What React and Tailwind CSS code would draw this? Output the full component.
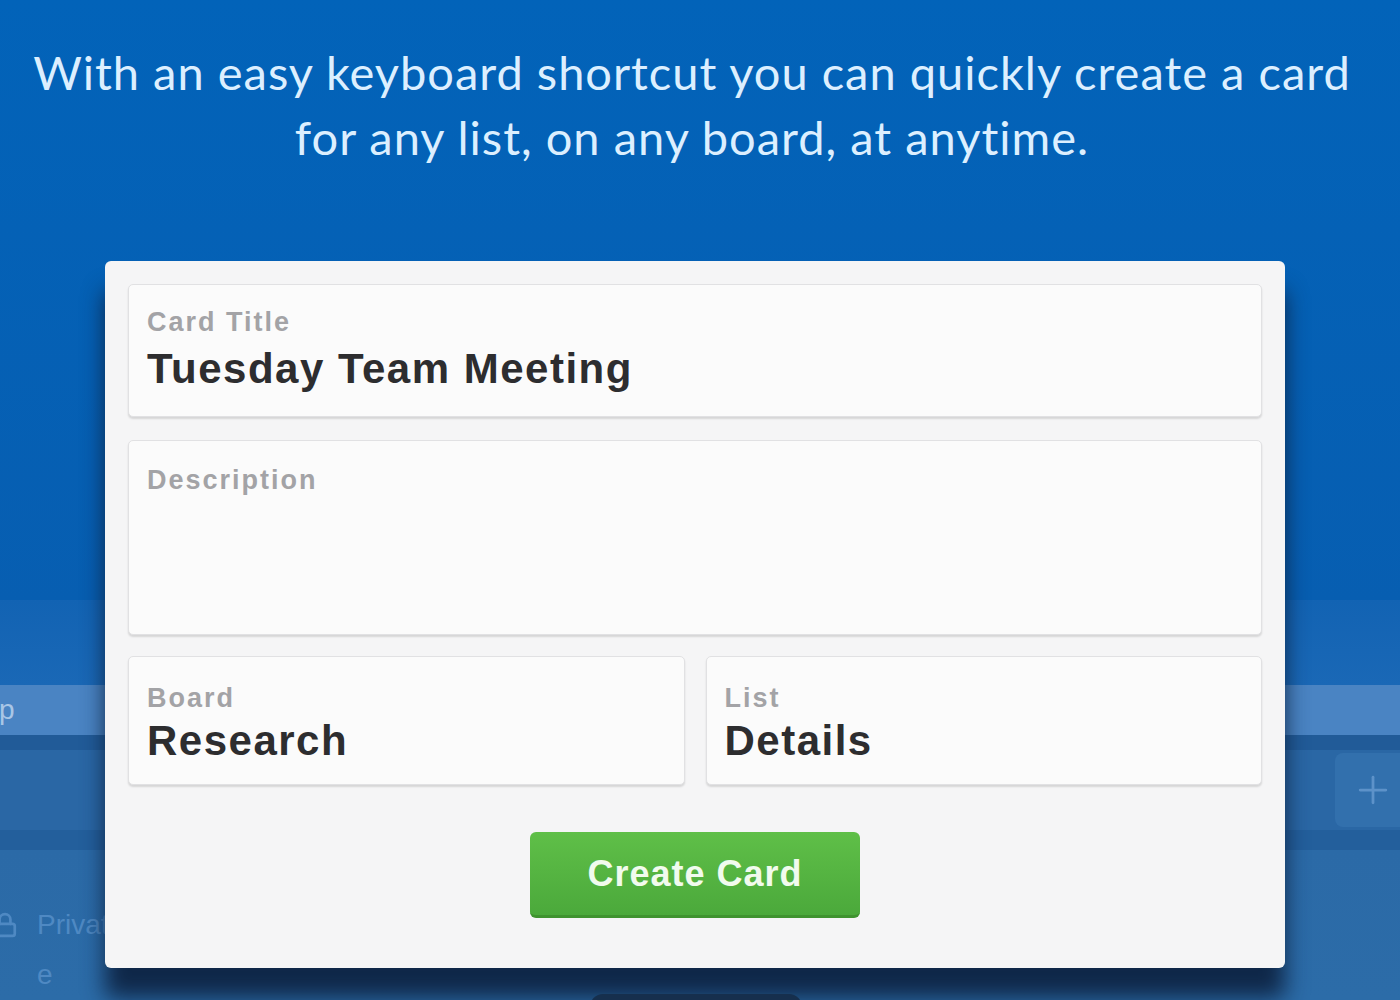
import { Plus, Lock } from "lucide-react";

function Field({ label, value, className = "", gap = "mt-3" }) {
  return (
    <div
      className={[
        "rounded-[5px] border border-[#e1e1e3] bg-[#fbfbfb] pl-[18px] pt-[24px] shadow-[0_2px_2px_rgba(0,0,0,0.13)]",
        className,
      ].join(" ")}
    >
      <p className="text-[27px] font-bold leading-none tracking-[2px] text-[#a3a3a6]">{label}</p>
      {value && (
        <p className={["text-[42px] font-bold leading-none tracking-[1.5px] text-[#2d2d2f]", gap].join(" ")}>
          {value}
        </p>
      )}
    </div>
  );
}

export default function App() {
  return (
    <div className="relative h-[1000px] w-[1400px] overflow-hidden bg-[#0262b7] font-['Liberation_Sans',Arial,sans-serif]">
      {/* ── Tablero difuminado detrás ─────────────────────────── */}
      <div className="flex h-full flex-col">
        <div className="h-[600px] shrink-0 bg-gradient-to-b from-[#0263b9] to-[#075eb1]" />
        <div className="h-[85px] shrink-0 bg-gradient-to-b from-[#1263b3] to-[#1a68b6]" />
        <div className="flex h-[50px] shrink-0 items-center bg-[#4a84c3] text-[28px] text-[#a9c6e6]">
          <span className="-ml-[1px]">p</span>
        </div>
        <div className="h-[15px] shrink-0 bg-[#215b98]" />
        <div className="flex h-[80px] shrink-0 items-center justify-end bg-[#2a67a5]">
          <div className="-mr-[10px] flex h-[74px] w-[75px] items-center justify-center rounded-lg bg-[#3270ad]">
            <Plus size={44} strokeWidth={1.5} className="text-[#5d92c9]" />
          </div>
        </div>
        <div className="h-[20px] shrink-0 bg-[#235f9c]" />
        <div className="min-h-0 flex-1 overflow-hidden bg-gradient-to-b from-[#2b6aa7] to-[#2c6ca8] pt-[50px] text-[28px] leading-[50px] text-[#4f89c3]">
          <div className="flex items-center gap-[19px]">
            <Lock size={26} strokeWidth={2.5} className="-ml-[8px]" />
            <span>Private</span>
          </div>
          <div className="pl-[37px]">e</div>
        </div>
      </div>

      {/* ── Capa superior: título y modal ─────────────────────── */}
      <div className="absolute inset-0 flex flex-col">
        <h1 className="mt-[40px] pr-[16px] text-center font-['Lato',sans-serif] text-[47px] font-normal leading-[65px] tracking-[1px] text-[#dcefff]">
          With an easy keyboard shortcut you can quickly create a card
          <br />
          for any list, on any board, at anytime.
        </h1>

        <div className="ml-[105px] mt-[91px] flex h-[707px] w-[1180px] flex-col rounded-[6px] bg-[#f5f5f6] p-[23px] shadow-[0_30px_22px_rgba(12,32,62,0.9)]">
          <Field label="Card Title" value="Tuesday Team Meeting" className="h-[133px]" gap="mt-[12px]" />
          <Field label="Description" className="mt-[23px] h-[195px] pt-[26px]" />
          <div className="mt-[21px] grid grid-cols-2 gap-[21px]">
            <Field label="Board" value="Research" className="h-[129px] pt-[28px]" gap="mt-[8px]" />
            <Field label="List" value="Details" className="h-[129px] pt-[28px]" gap="mt-[8px]" />
          </div>
          <div className="mt-[47px] flex justify-center">
            <button
              type="button"
              className="flex h-[86px] w-[330px] items-center justify-center rounded-[6px] border-b-[3px] border-[#3f932f] bg-gradient-to-b from-[#5fbf48] to-[#4ba93b] text-[36px] font-bold tracking-[1px] text-[#f1fbee]"
            >
              Create Card
            </button>
          </div>
        </div>
      </div>

      {/* indicador inferior */}
      <div className="absolute bottom-[-20px] left-[590px] h-[26px] w-[212px] rounded-full bg-[#162f4d]" />
    </div>
  );
}
